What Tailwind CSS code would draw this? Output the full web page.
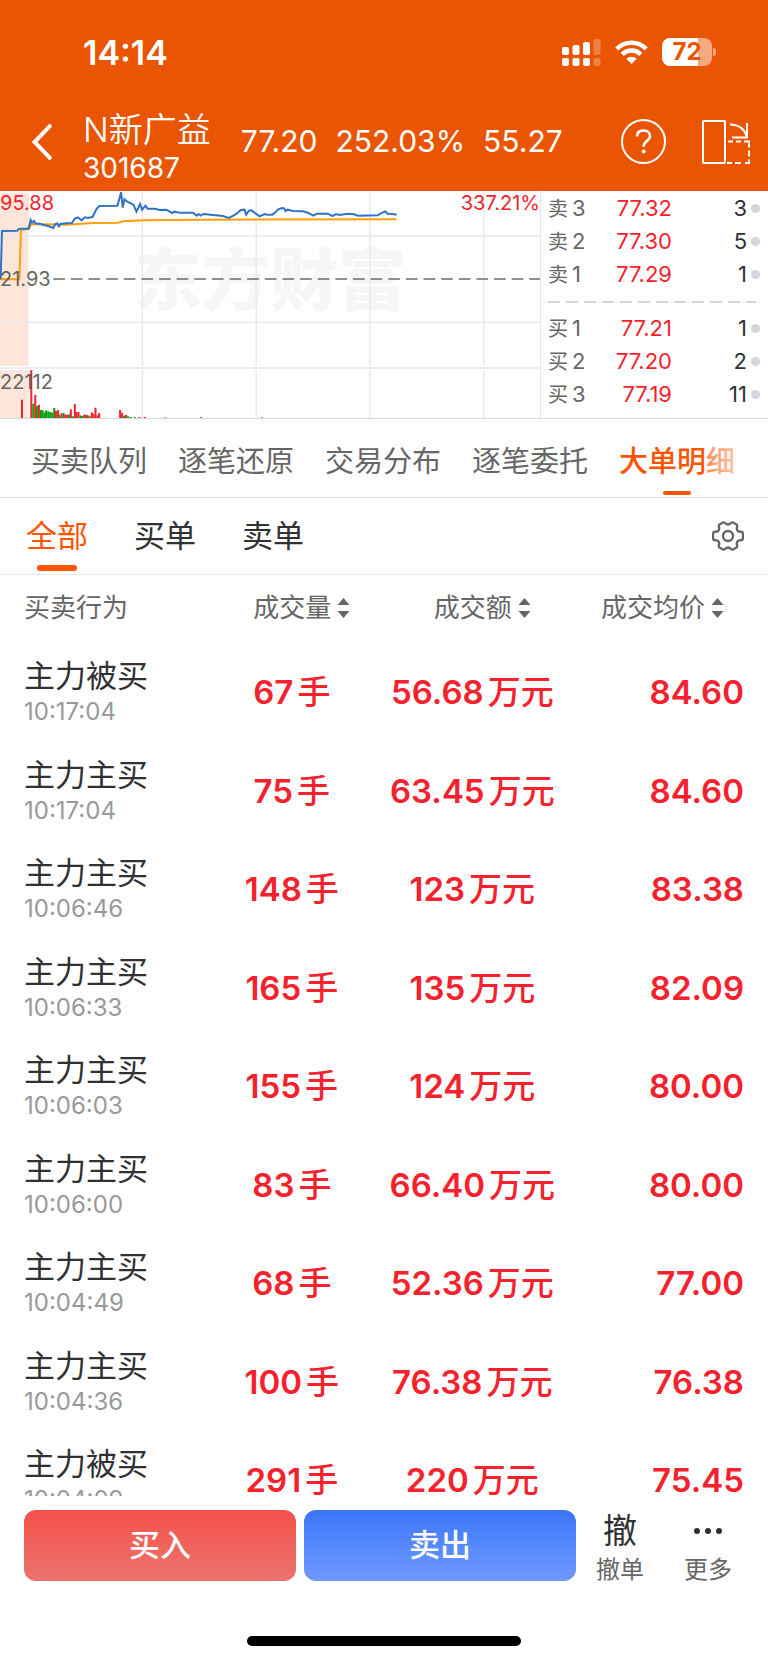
<!DOCTYPE html>
<html lang="zh-CN">

<head>
    <meta charset="UTF-8">
    <meta name="viewport" content="width=device-width, initial-scale=1.0">
    <title>N新广益 301687 - 大单明细</title>
    <script src="https://cdn.jsdelivr.net/npm/@tailwindcss/browser@4"></script>
</head>

<body class="bg-white h-screen flex flex-col overflow-hidden font-['Inter','Noto_Sans_CJK_SC',sans-serif] text-[#303133]">
    <header class="bg-[#ea5504] text-white h-[191px] shrink-0">
        <!-- status bar -->
        <div class="flex items-center h-[98px] pt-[6px] pl-[83px] pr-[52px]">
            <span class="text-[34px] font-semibold">14:14</span>
            <svg class="ml-auto w-[39px] h-7" viewBox="0 0 39 28" fill="currentColor">
                <rect x="0" y="9" width="7" height="8" rx="2" />
                <rect x="0" y="20" width="7" height="8" rx="2" />
                <rect x="10.5" y="7" width="7" height="10" rx="2" />
                <rect x="10.5" y="20" width="7" height="8" rx="2" />
                <rect x="21" y="4" width="7" height="13" rx="2" />
                <rect x="21" y="20" width="7" height="8" rx="2" />
                <g opacity=".25">
                    <rect x="31.5" y="1" width="7" height="16" rx="2" />
                    <rect x="31.5" y="20" width="7" height="8" rx="2" />
                </g>
            </svg>
            <svg class="ml-[14px] w-[33px] h-6" viewBox="0 0 33 24" fill="none" stroke="currentColor" stroke-width="4.6">
                <path d="M1.8 8.8a21 21 0 0 1 29.4 0" />
                <path d="M7.2 14.3a13.4 13.4 0 0 1 18.6 0" />
                <path d="M16.5 24l-5.2-5.3a7.6 7.6 0 0 1 10.4 0z" fill="currentColor" stroke="none" />
            </svg>
            <div class="ml-[14px] flex items-center">
                <div class="w-[50px] h-7 rounded-[8px] bg-linear-to-r from-white from-72% to-white/50 to-72% flex items-center justify-center text-[24px] leading-7 font-bold text-[#ea5504]">72</div>
                <div class="ml-px w-[3px] h-2 rounded-r-full bg-white/50"></div>
            </div>
        </div>

        <!-- stock bar -->
        <div class="flex items-center h-[87px] pl-8 pr-[18px]">
            <button aria-label="返回" class="w-[51px]">
                <svg class="w-5 h-[38px]" viewBox="0 0 20 38" fill="none" stroke="currentColor" stroke-width="4">
                    <path d="M19 2L2.5 19L19 36" />
                </svg>
            </button>
            <h1 class="mt-[15px] text-[34px] leading-[39px] font-[350]">N新广益<span class="block text-[28px] font-normal">301687</span></h1>
            <div class="ml-[30px] flex gap-[18px] text-[30px]">
                <span>77.20</span>
                <span>252.03%</span>
                <span>55.27</span>
            </div>
            <button aria-label="帮助" class="ml-auto">
                <svg class="w-[45px] h-[45px]" viewBox="0 0 45 45" fill="none" stroke="currentColor" stroke-width="2">
                    <circle cx="22.5" cy="22.5" r="21.5" />
                    <path d="M16 17.5c0-4 2.8-6 6.5-6s6.5 2.2 6.5 5.6c0 5-6.3 5-6.3 9.7v1" stroke-width="2.6" />
                    <circle cx="22.7" cy="32.5" r="2" fill="currentColor" stroke="none" />
                </svg>
            </button>
            <button aria-label="横屏" class="ml-9">
                <svg class="w-12 h-11" viewBox="0 0 48 44" fill="none" stroke="currentColor" stroke-width="2">
                    <rect x="1" y="1" width="22" height="42" rx="1" />
                    <path d="M28 4.5c9 0 15 5 16.5 12M45 3v14.5H30" />
                    <path d="M26 21.5h5m3 0h5m3 0h5v6m0 3v6m0 3v3.5h-4m-4 0h-6m-3 0h-5" />
                </svg>
            </button>
        </div>
    </header>

    <main class="flex-1 min-h-0 flex flex-col">
        <section class="flex shrink-0 border-b border-[#d9dbe0]">
            <!-- intraday chart -->
            <div class="relative flex-1 h-[227px] border-r border-[#e4e7ed] overflow-hidden text-[20px] leading-6">
                <div class="absolute inset-x-0 top-[41px] text-center text-[68px] leading-[96px] font-black text-[#f6f6f6]">东方财富</div>
                <svg class="absolute inset-0 w-full h-full" viewBox="0 18 1623 681" preserveAspectRatio="none" fill="none">
                    <path d="M0 24h86v519H0zM0 555h86v144H0z" fill="#fce5d9" />
                    <path d="M0 153h1623M0 412h1623M0 549h1623M428 24v519m0 12v144M770 24v519m0 12v144M1112 24v519m0 12v144M1454 24v519m0 12v144" stroke="#e4e8f0" stroke-width="4" />
                    <path d="M160 282H1623" stroke="#6b6b6b" stroke-width="4" stroke-dasharray="35 18" />
                    <g id="volumes"></g>
                    <path d="M0 283H58L63 135L88 130L92 120L100 117L200 119L280 114L355 113L370 109L430 106L600 104L1192 103" stroke="#ff9d0a" stroke-width="6" />
                    <path d="M2 283L6 138L52 137L58 131L86 131L92 105L96 113L102 108L108 116L120 116L130 120L145 123L160 129L166 118L172 115L177 124L182 117L200 115L216 114L225 101L234 97L245 106L255 97L264 99L278 96L290 72L298 63L353 62L364 22L369 68L374 43L384 51L401 59L410 80L421 57L427 74L437 62L443 71L465 71L480 75L500 74L517 84L524 80L540 83L580 83L591 92L597 87L603 92L612 87L640 90L670 93L688 99L700 93L712 85L724 75L735 74L740 89L748 77L756 76L780 94L795 87L802 89L818 89L828 82L835 74L848 69L854 70L858 78L865 74L880 78L910 79L925 83L942 92L952 86L985 86L1000 93L1010 87L1020 90L1045 86L1065 88L1075 92L1135 91L1145 85L1158 79L1165 86L1180 87L1192 89" stroke="#2f74c4" stroke-width="6" />
                </svg>
                <span class="absolute left-0 top-0 text-[#f5222d]">95.88</span>
                <span class="absolute right-0 top-0 text-[#f5222d]">337.21%</span>
                <span class="absolute left-0 top-[76px] text-[#666]">21.93</span>
                <span class="absolute left-0 top-[179px] text-[#666]">22112</span>
            </div>

            <!-- order book -->
            <div class="w-[227px] pt-px pl-[7px] pr-2 text-[22px]">
                <div id="asks"></div>
                <svg class="mt-[10px] mb-[9px] w-[208px] h-[2px] block" viewBox="0 0 208 2">
                    <path d="M0 1H208" stroke="#d2d6dd" stroke-width="2" stroke-dasharray="12 6" />
                </svg>
                <div id="bids"></div>
            </div>
        </section>

        <nav class="relative shrink-0 h-[79px] pl-[31px] flex items-center gap-[31px] border-b border-[#dcdfe6] text-[29px] text-[#666] whitespace-nowrap overflow-hidden">
            <a href="#" class="pt-[7px]">买卖队列</a>
            <a href="#" class="pt-[7px]">逐笔还原</a>
            <a href="#" class="pt-[7px]">交易分布</a>
            <a href="#" class="pt-[7px]">逐笔委托</a>
            <a href="#" class="relative h-full pt-[7px] flex items-center font-medium text-[#ff5400]">大单明细
                <i class="absolute left-1/2 -translate-x-1/2 bottom-[2px] w-7 h-1 rounded-full bg-[#ff5400]"></i>
            </a>
            <div class="absolute right-0 inset-y-0 w-[62px] bg-linear-to-r from-white/35 to-white"></div>
        </nav>

        <div class="shrink-0 h-[77px] pl-[26px] pr-6 flex items-center gap-[46px] border-b border-[#e8e8e8] text-[31px]">
            <button class="relative h-full text-[#ff5400]">全部
                <i class="absolute left-1/2 -translate-x-1/2 bottom-[3px] w-10 h-[6px] rounded-full bg-[#ff5400]"></i>
            </button>
            <button>买单</button>
            <button>卖单</button>
            <button aria-label="设置" class="ml-auto">
                <svg class="w-8 h-[30px]" viewBox="0 0 32 30" fill="none" stroke="#666" stroke-width="2.4" stroke-linejoin="round">
                    <circle cx="16" cy="15" r="5" />
                    <path d="M11 1.5C13 .5 13 3.5 16 3.5S19 .5 21 1.5L24.5 3.5C26.500 5 23.5 6.5 25.5 9.5S30.5 9 31 12.5V17.5C30.5 21 27.5 17.5 25.5 20.5S26.5 25 24.5 26.5L21 28.500C19 29.5 19 26.5 16 26.5S13 29.5 11 28.5L7.5 26.5C5.5 25 8.5 23.5 6.5 20.5S1.5 21 1 17.5V12.5C1.5 9 4.5 12.5 6.5 9.5S5.5 5 7.5 3.5Z" />
                </svg>
            </button>
        </div>

        <!-- big orders -->
        <div class="flex-1 min-h-0 overflow-hidden">
            <table class="w-full table-fixed">
                <thead class="text-[26px] text-[#666]">
                    <tr class="h-[69px]">
                        <th class="w-[26%] pl-6 pb-1 text-left font-normal">买卖行为</th>
                        <th class="w-[24%] pl-5 pb-1 font-normal">
                            <button class="inline-flex items-center gap-[6px]">成交量<svg class="w-[13px] h-5" viewBox="0 0 12 20" fill="#666"><path d="M0 7L6 0L12 7zM0 13L6 20L12 13z" /></svg></button>
                        </th>
                        <th class="w-[23%] pl-5 pb-1 font-normal">
                            <button class="inline-flex items-center gap-[6px]">成交额<svg class="w-[13px] h-5" viewBox="0 0 12 20" fill="#666"><path d="M0 7L6 0L12 7zM0 13L6 20L12 13z" /></svg></button>
                        </th>
                        <th class="pr-11 pb-1 text-right font-normal">
                            <button class="inline-flex items-center gap-[6px]">成交均价<svg class="w-[13px] h-5" viewBox="0 0 12 20" fill="#666"><path d="M0 7L6 0L12 7zM0 13L6 20L12 13z" /></svg></button>
                        </th>
                    </tr>
                </thead>
                <tbody id="orders"></tbody>
            </table>
        </div>
    </main>

    <footer class="shrink-0 h-[167px] pt-[14px] flex flex-col">
        <div class="flex gap-2 h-[71px] pl-6 pr-4">
            <button class="flex-1 rounded-xl bg-linear-to-b from-[#f4504a] to-[#ec736e] text-white text-[31px] font-medium">买入</button>
            <button class="flex-1 rounded-xl bg-linear-to-b from-[#3b76f9] to-[#6f9aff] text-white text-[31px] font-medium">卖出</button>
            <button class="w-[72px] flex flex-col items-center justify-between text-[24px] leading-[22px] text-[#666]">
                <span class="text-[34px] leading-[42px] text-[#303133]">撤</span>撤单
            </button>
            <button class="w-[88px] flex flex-col items-center justify-between text-[24px] leading-[22px] text-[#666]">
                <svg class="w-7 h-[42px]" viewBox="0 0 28 42" fill="#303133">
                    <circle cx="3" cy="21" r="3" />
                    <circle cx="14" cy="21" r="3" />
                    <circle cx="25" cy="21" r="3" />
                </svg>更多
            </button>
        </div>
        <div class="mt-auto mb-[17px] mx-auto w-[274px] h-[10px] rounded-full bg-black"></div>
    </footer>

    <script>
        const asks = [['卖', 3, '77.32', 3], ['卖', 2, '77.30', 5], ['卖', 1, '77.29', 1]];
        const bids = [['买', 1, '77.21', 1], ['买', 2, '77.20', 2], ['买', 3, '77.19', 11]];

        const orders = [
            ['主力被买', '10:17:04', '67', '56.68', '84.60'],
            ['主力主买', '10:17:04', '75', '63.45', '84.60'],
            ['主力主买', '10:06:46', '148', '123', '83.38'],
            ['主力主买', '10:06:33', '165', '135', '82.09'],
            ['主力主买', '10:06:03', '155', '124', '80.00'],
            ['主力主买', '10:06:00', '83', '66.40', '80.00'],
            ['主力主买', '10:04:49', '68', '52.36', '77.00'],
            ['主力主买', '10:04:36', '100', '76.38', '76.38'],
            ['主力被买', '10:04:09', '291', '220', '75.45']
        ];

        // x, height, r = up / g = down
        const volumes = [
            [63, 55, 'r'], [91, 144, 'r'], [97, 43, 'g'], [103, 69, 'r'], [108, 36, 'g'], [114, 40, 'r'],
            [120, 24, 'g'], [125, 23, 'g'], [131, 17, 'g'], [136, 23, 'g'], [142, 20, 'g'], [148, 18, 'g'],
            [154, 16, 'g'], [160, 30, 'g'], [165, 21, 'r'], [171, 24, 'r'], [176, 10, 'g'], [182, 14, 'r'],
            [188, 15, 'g'], [193, 10, 'r'], [199, 10, 'r'], [205, 11, 'g'], [210, 26, 'r'], [216, 5, 'g'],
            [222, 42, 'r'], [227, 18, 'r'], [233, 18, 'r'], [239, 8, 'g'], [244, 6, 'g'], [250, 10, 'r'],
            [256, 10, 'r'], [261, 8, 'g'], [267, 5, 'r'], [273, 17, 'r'], [278, 12, 'r'], [284, 31, 'r'],
            [290, 8, 'r'], [295, 15, 'r'], [358, 24, 'r'], [364, 15, 'r'], [370, 7, 'g'], [376, 9, 'r'],
            [382, 5, 'g'], [390, 3, 'g'], [402, 3, 'g'], [416, 3, 'r'], [432, 3, 'r'], [494, 2, 'r'],
            [602, 3, 'g'], [784, 2, 'r']
        ];

        function bookRow([side, level, price, qty]) {
            return `<div class="flex items-center h-[33px]">
                <span class="w-[57px] whitespace-nowrap text-[#666]"><span class="mr-1 text-[20px]">${side}</span>${level}</span>
                <span class="w-[67px] text-right text-[#f5222d]">${price}</span>
                <span class="flex-1 text-right">${qty}</span>
                <i class="ml-1 w-[9px] h-[9px] rounded-full bg-[#d2d6dd]"></i>
            </div>`;
        }

        document.getElementById('asks').innerHTML = asks.map(bookRow).join('');
        document.getElementById('bids').innerHTML = bids.map(bookRow).join('');

        document.getElementById('volumes').innerHTML = volumes.map(([x, h, c]) =>
            `<rect x="${x}" y="${699 - h}" width="6" height="${h}" fill="${c === 'r' ? '#f5222d' : '#0a9f0a'}" />`
        ).join('');

        document.getElementById('orders').innerHTML = orders.map(([type, time, vol, amount, price]) => `
            <tr class="odd:h-[98px] even:h-[99px] text-[33px] font-semibold text-[#f5222d] whitespace-nowrap">
                <td class="pl-6 pb-[2px] font-normal">
                    <div class="text-[31px] leading-10 text-[#303133]">${type}</div>
                    <div class="text-[24px] leading-8 text-[#999]">${time}</div>
                </td>
                <td class="text-center">${vol}<span class="ml-1 font-medium">手</span></td>
                <td class="text-center">${amount}<span class="ml-1 font-medium">万元</span></td>
                <td class="pr-6 text-right">${price}</td>
            </tr>`).join('');
    </script>
</body>

</html>
